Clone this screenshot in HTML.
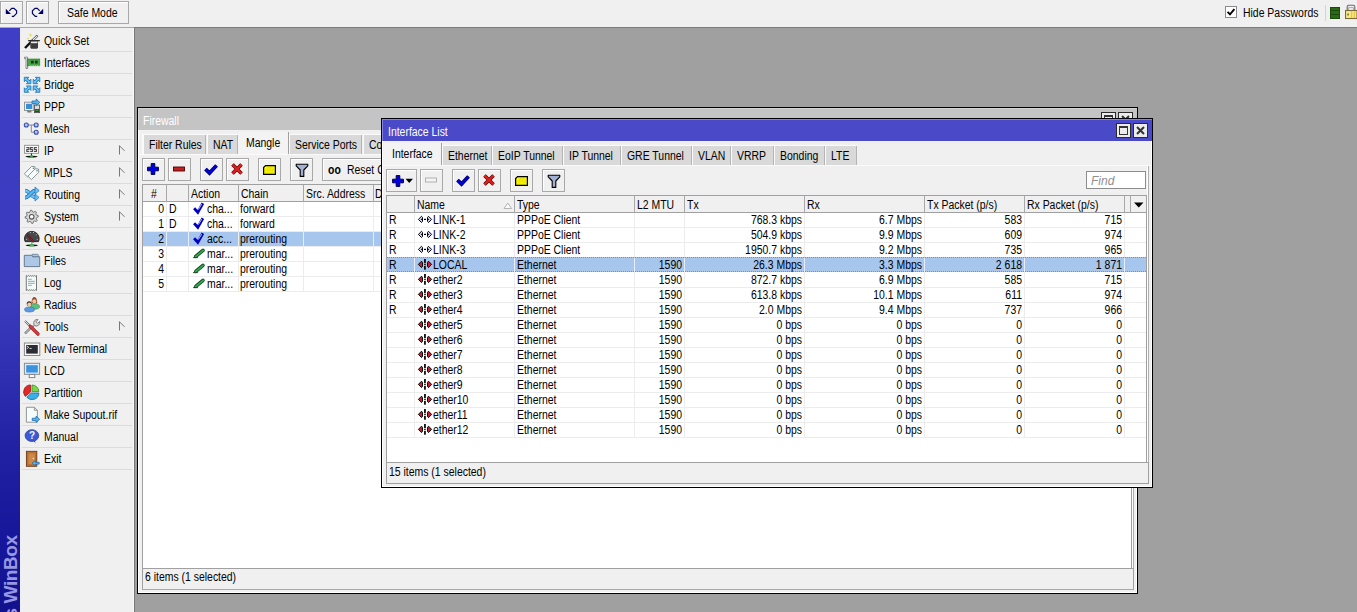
<!DOCTYPE html><html><head><meta charset="utf-8"><style>
*{box-sizing:border-box;margin:0;padding:0}
html,body{width:1357px;height:612px;overflow:hidden;background:#a0a0a0;font-family:"Liberation Sans", sans-serif;font-size:12px;letter-spacing:0;color:#000}
.a{position:absolute}
.t{position:absolute;white-space:pre;line-height:14px;transform:scaleX(.87);transform-origin:0 0}
.r{position:absolute;white-space:pre;line-height:14px;text-align:right;width:120px;transform:scaleX(.87);transform-origin:100% 0}
.btn{position:absolute;background:#f0f0f0;border:1px solid #a8a8a8;box-shadow:inset 1px 1px 0 #fff}
.sep{position:absolute;height:1px;background:#dcdcdc}
.tab{position:absolute;background:#d9d9d9;border-right:1px solid #b4b4b4;box-shadow:inset 1px 0 0 #fafafa,0 -1px 0 #fafafa}
.tabA{position:absolute;background:#f3f3f3;border-right:1px solid #a0a0a0}
.hdr{position:absolute;background:#f0f0f0}
.vl{position:absolute;width:1px}
svg{position:absolute;overflow:visible}
</style></head><body>
<div class="a" style="left:134px;top:27px;width:1223px;height:1px;background:#787878"></div>
<div class="a" style="left:134px;top:27px;width:1px;height:585px;background:#787878"></div>
<div class="a" style="left:0;top:0;width:1357px;height:27px;background:#f0f0f0"></div>
<div class="a" style="left:0;top:27px;width:134px;height:1px;background:#a8a8a8"></div>
<div class="a" style="left:134px;top:27px;width:1223px;height:1px;background:#7c7c7c"></div>
<div class="btn" style="left:0;top:1px;width:23px;height:23px"></div>
<div class="btn" style="left:26px;top:1px;width:23px;height:23px"></div>
<svg style="left:2px;top:3px" width="20" height="20" viewBox="0 0 20 20"><path d="M3.8 5.8 V11 H9Z" fill="#00006a"/><path d="M7.3 7.8 L9.7 5.4 H12 L14.6 7.8 V10.3 L11.6 13.4 H9.8" fill="none" stroke="#00006a" stroke-width="1.15"/></svg>
<svg style="left:28px;top:3px" width="20" height="20" viewBox="0 0 20 20"><path d="M15.2 5.8 V11 H10Z" fill="#00006a"/><path d="M11.7 7.8 L9.3 5.4 H7 L4.4 7.8 V10.5 L7.3 13.4 H9.2" fill="none" stroke="#00006a" stroke-width="1.15"/></svg>
<div class="btn" style="left:58px;top:1px;width:71px;height:23px"></div>
<div class="t" style="left:67px;top:6px">Safe Mode</div>
<div class="a" style="left:1225px;top:6px;width:12px;height:12px;background:#fff;border:1px solid #8a8a8a"></div>
<svg style="left:1226px;top:7px" width="10" height="10" viewBox="0 0 10 10"><path d="M1.6 4.8 L4 7.4 L8.4 2.2" fill="none" stroke="#000" stroke-width="1.9"/></svg>
<div class="t" style="left:1243px;top:6px">Hide Passwords</div>
<div class="a" style="left:1325px;top:5px;width:1px;height:16px;background:#d4d4d4"></div>
<div class="a" style="left:1330px;top:7px;width:10px;height:12px;background:#2a6a14;border:1px solid #1a4a0c"></div>
<div class="a" style="left:1331px;top:10px;width:8px;height:1px;background:#1a4a0c"></div>
<div class="a" style="left:1331px;top:14px;width:8px;height:1px;background:#1a4a0c"></div>
<svg style="left:1345px;top:4px" width="12" height="15" viewBox="0 0 12 15"><path d="M2.2 6.5 V2.8 Q2.2 1.3 3.7 1.3 H8.3 Q9.8 1.3 9.8 2.8 V6.5" fill="none" stroke="#6a6a6a" stroke-width="1.1"/><path d="M3.6 6.5 V3.6 H8.4 V6.5" fill="none" stroke="#8a8a8a" stroke-width="0.7"/><rect x="0.55" y="6.5" width="11.5" height="8" fill="#f8ea80" stroke="#7a6a3a" stroke-width="1.1"/><rect x="6.2" y="7.3" width="1" height="6.5" fill="#e8b848"/><rect x="8.8" y="7.3" width="1" height="6.5" fill="#e8b848"/><rect x="2.6" y="9.5" width="1" height="2" fill="#3a3010"/></svg>
<div class="a" style="left:0;top:28px;width:20px;height:584px;background:linear-gradient(#3e3ec6 0%,#3c3cc2 25%,#3a3abc 47%,#2e2eb0 60%,#2020a2 73%,#16169a 88%,#12128f 100%)"></div>
<svg style="left:0;top:500px" width="20" height="112" viewBox="0 0 20 112"><text transform="translate(17.2,118.5) rotate(-90)" font-family="Liberation Sans" font-size="19" font-weight="bold" fill="#9898e0" letter-spacing="-0.4">s WinBox</text></svg>
<div class="a" style="left:20px;top:28px;width:114px;height:584px;background:#f0f0f0"></div>
<div class="a" style="left:133px;top:28px;width:1px;height:584px;background:#fafafa"></div>
<div class="t" style="left:44px;top:34px">Quick Set</div>
<div class="sep" style="left:22px;top:51px;width:110px"></div>
<svg style="left:22px;top:30px" width="20" height="20" viewBox="0 0 20 20"><line x1="3" y1="18" x2="11" y2="10" stroke="#111" stroke-width="2.4"/>
<line x1="10.5" y1="10.5" x2="15.5" y2="5.5" stroke="#333" stroke-width="2.4"/>
<line x1="11" y1="10" x2="15.2" y2="5.8" stroke="#f4f4f4" stroke-width="1.1"/>
<path d="M8.3 11.2 H16 V17.6 Q16 18.7 14.8 18.7 H9.5 Q8.3 18.7 8.3 17.6Z" fill="#3c3c3c"/>
<rect x="8.9" y="11.4" width="6.5" height="1.8" fill="#eaeaea"/>
<rect x="6.2" y="10" width="11.6" height="1.3" fill="#2a2a2a"/>
<path d="M8.5 3 L9.1 4.4 L10.5 5 L9.1 5.6 L8.5 7 L7.9 5.6 L6.5 5 L7.9 4.4Z" fill="#e4dc60"/>
<path d="M6 7 L6.4 8.1 L7.5 8.5 L6.4 8.9 L6 10 L5.6 8.9 L4.5 8.5 L5.6 8.1Z" fill="#e4dc60"/></svg>
<div class="t" style="left:44px;top:56px">Interfaces</div>
<div class="sep" style="left:22px;top:73px;width:110px"></div>
<svg style="left:22px;top:52px" width="20" height="20" viewBox="0 0 20 20"><path d="M2.5 5.2 H5.6 V16.5 H4 V6.6 H2.5Z" fill="#f8f8f8" stroke="#7a7a7a" stroke-width="0.9"/>
<rect x="5.6" y="7" width="12.2" height="6.8" fill="#46a646" stroke="#2a7a2a" stroke-width="0.6"/>
<rect x="8.9" y="8.7" width="2.8" height="2.8" fill="#163a16"/>
<rect x="12.9" y="8.7" width="2.8" height="2.8" fill="#163a16"/>
<g fill="#c0e890"><rect x="7.8" y="13.2" width="0.9" height="0.9"/><rect x="9.6" y="13.2" width="0.9" height="0.9"/><rect x="11.4" y="13.2" width="0.9" height="0.9"/><rect x="13.2" y="13.2" width="0.9" height="0.9"/><rect x="15" y="13.2" width="0.9" height="0.9"/><rect x="16.6" y="13.2" width="0.9" height="0.9"/></g></svg>
<div class="t" style="left:44px;top:78px">Bridge</div>
<div class="sep" style="left:22px;top:95px;width:110px"></div>
<svg style="left:22px;top:74px" width="20" height="20" viewBox="0 0 20 20"><line x1="3.80" y1="4.80" x2="7.40" y2="8.20" stroke="#1f6db0" stroke-width="3"/><polygon points="2.30,3.30 6.80,3.30 2.30,7.80" fill="#5cc0f2" stroke="#1f6db0" stroke-width="0.8" stroke-linejoin="round"/><polygon points="8.90,9.70 8.90,5.20 4.40,9.70" fill="#5cc0f2" stroke="#1f6db0" stroke-width="0.8" stroke-linejoin="round"/><line x1="3.80" y1="4.80" x2="7.40" y2="8.20" stroke="#6ccaf6" stroke-width="1.5"/><line x1="16.30" y1="4.80" x2="12.70" y2="8.20" stroke="#1f6db0" stroke-width="3"/><polygon points="17.80,3.30 13.30,3.30 17.80,7.80" fill="#5cc0f2" stroke="#1f6db0" stroke-width="0.8" stroke-linejoin="round"/><polygon points="11.20,9.70 11.20,5.20 15.70,9.70" fill="#5cc0f2" stroke="#1f6db0" stroke-width="0.8" stroke-linejoin="round"/><line x1="16.30" y1="4.80" x2="12.70" y2="8.20" stroke="#6ccaf6" stroke-width="1.5"/><line x1="3.80" y1="16.80" x2="7.40" y2="13.40" stroke="#1f6db0" stroke-width="3"/><polygon points="2.30,18.30 6.80,18.30 2.30,13.80" fill="#5cc0f2" stroke="#1f6db0" stroke-width="0.8" stroke-linejoin="round"/><polygon points="8.90,11.90 8.90,16.40 4.40,11.90" fill="#5cc0f2" stroke="#1f6db0" stroke-width="0.8" stroke-linejoin="round"/><line x1="3.80" y1="16.80" x2="7.40" y2="13.40" stroke="#6ccaf6" stroke-width="1.5"/><line x1="16.30" y1="16.80" x2="12.70" y2="13.40" stroke="#1f6db0" stroke-width="3"/><polygon points="17.80,18.30 13.30,18.30 17.80,13.80" fill="#5cc0f2" stroke="#1f6db0" stroke-width="0.8" stroke-linejoin="round"/><polygon points="11.20,11.90 11.20,16.40 15.70,11.90" fill="#5cc0f2" stroke="#1f6db0" stroke-width="0.8" stroke-linejoin="round"/><line x1="16.30" y1="16.80" x2="12.70" y2="13.40" stroke="#6ccaf6" stroke-width="1.5"/></svg>
<div class="t" style="left:44px;top:100px">PPP</div>
<div class="sep" style="left:22px;top:117px;width:110px"></div>
<svg style="left:22px;top:96px" width="20" height="20" viewBox="0 0 20 20"><rect x="2.5" y="6.2" width="9.3" height="8.3" fill="#eef4fa" stroke="#8a8a8a" stroke-width="0.9"/>
<rect x="4" y="7.8" width="6.3" height="5.2" fill="#3a8ed8"/>
<rect x="5.2" y="14.6" width="4.2" height="1.9" fill="#7a7a7a"/>
<rect x="12.4" y="9" width="5.2" height="7.6" fill="#dcdcdc" stroke="#4a4a4a" stroke-width="0.8"/>
<rect x="12.9" y="13" width="4.2" height="3.2" fill="#284a28"/>
<rect x="13.5" y="13.8" width="2.8" height="1" fill="#50a050"/>
<path d="M10 5 H14.2 V3 L17.8 6.3 L14.2 9.6 V7.6 H10Z" fill="#54b4f0" stroke="#1f6db0" stroke-width="0.8" stroke-linejoin="round"/></svg>
<div class="t" style="left:44px;top:122px">Mesh</div>
<div class="sep" style="left:22px;top:139px;width:110px"></div>
<svg style="left:22px;top:118px" width="20" height="20" viewBox="0 0 20 20"><path d="M6.3 7 H12.2 M9.3 7 V14.2 H12.2" fill="none" stroke="#8a8a8a" stroke-width="1"/>
<g fill="#b0c4fa" stroke="#3a4caa" stroke-width="1.1"><circle cx="4.3" cy="7" r="2"/><circle cx="14.2" cy="7" r="2"/><circle cx="14.2" cy="14.2" r="2"/></g></svg>
<div class="t" style="left:44px;top:144px">IP</div>
<div class="sep" style="left:22px;top:161px;width:110px"></div>
<svg style="left:22px;top:140px" width="20" height="20" viewBox="0 0 20 20"><rect x="2.6" y="5.3" width="14" height="8" fill="#fff" stroke="#8a8a8a" stroke-width="0.9"/>
<g fill="none" stroke="#505050" stroke-width="1.15" stroke-linejoin="miter"><path d="M4.3 7.5 H6.9 V9.4 H4.8 V11.3 H7.3"/><path d="M11 7.5 H8.5 V9.3 H10.6 V11.3 H8.1"/><path d="M14.9 7.5 H12.4 V9.3 H14.5 V11.3 H12"/></g>
<line x1="9.5" y1="13.3" x2="9.5" y2="16.5" stroke="#1a4a1a" stroke-width="1.1"/>
<ellipse cx="9.5" cy="16.6" rx="6.2" ry="0.9" fill="#111"/>
<circle cx="9.5" cy="16.6" r="1.3" fill="#3cb040"/></svg>
<svg style="left:118px;top:145px" width="8" height="10" viewBox="0 0 8 10"><path d="M1.5 0.5 V9.5 M1.5 0.8 L6.5 5.8" fill="none" stroke="#777" stroke-width="1"/></svg>
<div class="t" style="left:44px;top:166px">MPLS</div>
<div class="sep" style="left:22px;top:183px;width:110px"></div>
<svg style="left:22px;top:162px" width="20" height="20" viewBox="0 0 20 20"><g fill="#f6fcfc" stroke="#7f8f8f" stroke-width="0.9" stroke-linejoin="round">
<path d="M5.9 15.2 L2.3 11.8 L9.6 4.4 L12.9 4.6 L13.2 7.9Z"/>
<path d="M9.4 17.6 L5.9 14.2 L13.2 6.8 L16.5 7 L16.8 10.3Z"/></g>
<circle cx="11.4" cy="6.3" r="0.7" fill="#667"/><circle cx="15" cy="8.7" r="0.7" fill="#667"/></svg>
<svg style="left:118px;top:167px" width="8" height="10" viewBox="0 0 8 10"><path d="M1.5 0.5 V9.5 M1.5 0.8 L6.5 5.8" fill="none" stroke="#777" stroke-width="1"/></svg>
<div class="t" style="left:44px;top:188px">Routing</div>
<div class="sep" style="left:22px;top:205px;width:110px"></div>
<svg style="left:22px;top:184px" width="20" height="20" viewBox="0 0 20 20"><path d="M3.2 13.6 C8 13.6 8.5 6.6 13.6 6.6" fill="none" stroke="#2a78c0" stroke-width="3.6"/>
<path d="M3.2 6.6 C8 6.6 8.5 13.4 13.6 13.4" fill="none" stroke="#2a78c0" stroke-width="3.6"/>
<path d="M3.2 6.6 C8 6.6 8.5 13.4 13.6 13.4" fill="none" stroke="#6cc4f4" stroke-width="2.2"/>
<polygon points="13,9.8 17,13.4 13,17" fill="#6cc4f4" stroke="#2a78c0" stroke-width="0.8" stroke-linejoin="round"/>
<path d="M3.2 13.6 C8 13.6 8.5 6.6 13.6 6.6" fill="none" stroke="#2a78c0" stroke-width="3.6"/>
<path d="M3.2 13.6 C8 13.6 8.5 6.6 13.6 6.6" fill="none" stroke="#5ab8f0" stroke-width="2.2"/>
<polygon points="13,3 17.2,6.6 13,10.2" fill="#6cc4f4" stroke="#2a78c0" stroke-width="0.8" stroke-linejoin="round"/></svg>
<svg style="left:118px;top:189px" width="8" height="10" viewBox="0 0 8 10"><path d="M1.5 0.5 V9.5 M1.5 0.8 L6.5 5.8" fill="none" stroke="#777" stroke-width="1"/></svg>
<div class="t" style="left:44px;top:210px">System</div>
<div class="sep" style="left:22px;top:227px;width:110px"></div>
<svg style="left:22px;top:206px" width="20" height="20" viewBox="0 0 20 20"><polygon points="16.17,9.51 16.30,10.80 14.51,11.76 14.23,12.68 15.19,14.47 14.37,15.47 12.42,14.87 11.58,15.33 10.99,17.27 9.70,17.40 8.74,15.61 7.82,15.33 6.03,16.29 5.03,15.47 5.63,13.52 5.17,12.68 3.23,12.09 3.10,10.80 4.89,9.84 5.17,8.92 4.21,7.13 5.03,6.13 6.98,6.73 7.82,6.27 8.41,4.33 9.70,4.20 10.66,5.99 11.58,6.27 13.37,5.31 14.37,6.13 13.77,8.08 14.23,8.92" fill="#d8d8d8" stroke="#6a6a6a" stroke-width="0.9" stroke-linejoin="round"/><circle cx="9.7" cy="10.8" r="2.3" fill="#fff" stroke="#555" stroke-width="1.1"/></svg>
<svg style="left:118px;top:211px" width="8" height="10" viewBox="0 0 8 10"><path d="M1.5 0.5 V9.5 M1.5 0.8 L6.5 5.8" fill="none" stroke="#777" stroke-width="1"/></svg>
<div class="t" style="left:44px;top:232px">Queues</div>
<div class="sep" style="left:22px;top:249px;width:110px"></div>
<svg style="left:22px;top:228px" width="20" height="20" viewBox="0 0 20 20"><path d="M3.1 13.6 A7.3 7.3 0 1 1 16.5 13.6 Z" fill="#484848" stroke="#1c1c1c" stroke-width="0.9"/>
<g fill="#d0d0d0"><circle cx="4.6" cy="11.2" r="0.55"/><circle cx="5.6" cy="6.8" r="0.55"/><circle cx="8.3" cy="4.6" r="0.55"/><circle cx="11.5" cy="4.6" r="0.55"/><circle cx="14.3" cy="6.8" r="0.55"/><circle cx="15.3" cy="11.2" r="0.55"/></g>
<line x1="5.2" y1="6.2" x2="11.6" y2="14.2" stroke="#2a0a10" stroke-width="1.8"/>
<line x1="5.2" y1="6.2" x2="11.6" y2="14.2" stroke="#b02838" stroke-width="1"/>
<line x1="9.8" y1="13.6" x2="9.8" y2="16.2" stroke="#888" stroke-width="1"/>
<ellipse cx="9.8" cy="17.3" rx="6.3" ry="0.9" fill="#111"/>
<ellipse cx="9.8" cy="17.3" rx="2.3" ry="1.3" fill="#34c040"/></svg>
<div class="t" style="left:44px;top:254px">Files</div>
<div class="sep" style="left:22px;top:271px;width:110px"></div>
<svg style="left:22px;top:250px" width="20" height="20" viewBox="0 0 20 20"><path d="M10 4.3 H15.8 L16.6 5.6 V7 H10Z" fill="#a8c8e8" stroke="#647c94" stroke-width="0.8"/>
<path d="M2.3 5.3 H9.6 L10.8 6.8 H17.7 V16.6 H2.3Z" fill="#acc8e6" stroke="#5c7088" stroke-width="0.9" stroke-linejoin="round"/></svg>
<div class="t" style="left:44px;top:276px">Log</div>
<div class="sep" style="left:22px;top:293px;width:110px"></div>
<svg style="left:22px;top:272px" width="20" height="20" viewBox="0 0 20 20"><path d="M4.3 3.5 L5.3 4.3 L6.3 3.5 L7.3 4.3 L8.3 3.5 L9.3 4.3 L10.3 3.5 L11.3 4.3 L12.3 3.5 L13.3 4.3 L14.5 3.5 V18.5 L13.3 17.7 L12.3 18.5 L11.3 17.7 L10.3 18.5 L9.3 17.7 L8.3 18.5 L7.3 17.7 L6.3 18.5 L5.3 17.7 L4.3 18.5Z" fill="#f2fafa" stroke="#6a6a6a" stroke-width="0.9"/>
<g stroke="#8aa0a0" stroke-width="0.9"><line x1="6" y1="7.3" x2="9.8" y2="7.3"/><line x1="6" y1="9.3" x2="12.8" y2="9.3"/><line x1="6" y1="11.3" x2="12.8" y2="11.3"/><line x1="6" y1="13.3" x2="9.8" y2="13.3"/></g></svg>
<div class="t" style="left:44px;top:298px">Radius</div>
<div class="sep" style="left:22px;top:315px;width:110px"></div>
<svg style="left:22px;top:294px" width="20" height="20" viewBox="0 0 20 20"><ellipse cx="13" cy="12.6" rx="4.6" ry="2.6" fill="#5cc07a" stroke="#3a8a5a" stroke-width="0.6"/>
<path d="M9.6 9.5 Q9.5 3 12.3 3 Q15.2 3 15.2 9.5Z" fill="#8a4a2a"/>
<circle cx="12.3" cy="7.3" r="2" fill="#f0c8a0"/>
<ellipse cx="7.5" cy="15.5" rx="5" ry="2.5" fill="#5a9ae0" stroke="#3a6aaa" stroke-width="0.6"/>
<circle cx="7.2" cy="9.8" r="2.5" fill="#3a2a20"/>
<circle cx="7.3" cy="10.5" r="2" fill="#f0c8a0"/></svg>
<div class="t" style="left:44px;top:320px">Tools</div>
<div class="sep" style="left:22px;top:337px;width:110px"></div>
<svg style="left:22px;top:316px" width="20" height="20" viewBox="0 0 20 20"><line x1="3" y1="17.5" x2="9.5" y2="11" stroke="#6a7070" stroke-width="2.4"/>
<line x1="3" y1="17.5" x2="9.5" y2="11" stroke="#d8dcdc" stroke-width="1"/>
<path d="M9 11.5 L12 8.5 A3.5 3.5 0 0 1 16 3.6 L14 5.8 L15.6 7.4 L17.6 5.4 A3.5 3.5 0 0 1 12.5 9.5 L10 12.5Z" fill="#dcdcdc" stroke="#707070" stroke-width="0.9"/>
<line x1="3" y1="5" x2="8" y2="10" stroke="#6a6a6a" stroke-width="2"/>
<line x1="3" y1="5" x2="8" y2="10" stroke="#e0e0e0" stroke-width="0.9"/>
<line x1="8.3" y1="10.3" x2="16" y2="18" stroke="#8a1a1a" stroke-width="3.2" stroke-linecap="round"/>
<line x1="8.3" y1="10.3" x2="16" y2="18" stroke="#e03a3a" stroke-width="2" stroke-linecap="round"/></svg>
<svg style="left:118px;top:321px" width="8" height="10" viewBox="0 0 8 10"><path d="M1.5 0.5 V9.5 M1.5 0.8 L6.5 5.8" fill="none" stroke="#777" stroke-width="1"/></svg>
<div class="t" style="left:44px;top:342px">New Terminal</div>
<div class="sep" style="left:22px;top:359px;width:110px"></div>
<svg style="left:22px;top:338px" width="20" height="20" viewBox="0 0 20 20"><rect x="2.4" y="5" width="15.4" height="12.5" fill="#f8f8f8" stroke="#8a8a8a" stroke-width="1"/>
<rect x="4.2" y="7" width="11.6" height="8.6" fill="#2c2c34"/>
<path d="M5 8 L6.8 9.3 L5 10.6" fill="none" stroke="#e8e8e8" stroke-width="0.9"/>
<rect x="7.6" y="10" width="2" height="0.9" fill="#e8e8e8"/></svg>
<div class="t" style="left:44px;top:364px">LCD</div>
<div class="sep" style="left:22px;top:381px;width:110px"></div>
<svg style="left:22px;top:360px" width="20" height="20" viewBox="0 0 20 20"><rect x="2.4" y="3.3" width="15.2" height="11" fill="#dcefff" stroke="#8a8a8a" stroke-width="1"/>
<rect x="4.2" y="5.2" width="11.6" height="7.4" fill="#3c92dc"/>
<rect x="7.2" y="14.4" width="5.6" height="3.2" fill="#fafafa" stroke="#7a7a7a" stroke-width="0.9"/></svg>
<div class="t" style="left:44px;top:386px">Partition</div>
<div class="sep" style="left:22px;top:403px;width:110px"></div>
<svg style="left:22px;top:382px" width="20" height="20" viewBox="0 0 20 20"><path d="M10 9.6 V3 A6.8 6.8 0 0 1 16.9 9.6 Z" fill="#78d848" stroke="#3a8a2a" stroke-width="0.8"/>
<path d="M16.9 11 A6.9 6.9 0 0 1 4.8 15.3 L9.3 11 Z" fill="#3ab0e8" stroke="#1a6aa8" stroke-width="0.8"/>
<path d="M8.6 3 V10 L3.3 14.4 A6.9 6.9 0 0 1 8.6 3Z" fill="#e02828" stroke="#9a1a1a" stroke-width="0.8"/></svg>
<div class="t" style="left:44px;top:408px">Make Supout.rif</div>
<div class="sep" style="left:22px;top:425px;width:110px"></div>
<svg style="left:22px;top:404px" width="20" height="20" viewBox="0 0 20 20"><path d="M4.4 3.3 H12.4 L15.4 6.3 V18.2 H4.4Z" fill="#f4fcfc" stroke="#8a8a8a" stroke-width="0.9" stroke-linejoin="round"/>
<path d="M12.4 3.3 V6.3 H15.4" fill="none" stroke="#8a8a8a" stroke-width="0.9"/>
<path d="M10.2 14.2 H14 V12.2 L17.7 15.3 L14 18.4 V16.5 H10.2Z" fill="#54b4f0" stroke="#1f6db0" stroke-width="0.8" stroke-linejoin="round"/></svg>
<div class="t" style="left:44px;top:430px">Manual</div>
<div class="sep" style="left:22px;top:447px;width:110px"></div>
<svg style="left:22px;top:426px" width="20" height="20" viewBox="0 0 20 20"><path d="M11.5 14.5 L13.6 17.6 L12.6 13.8Z" fill="#2a3aa0"/>
<ellipse cx="9.9" cy="9.6" rx="6.8" ry="5.9" fill="#3c5ad4" stroke="#2a3aa0" stroke-width="0.8"/>
<text x="10" y="13.4" font-size="10" font-weight="bold" text-anchor="middle" fill="#f4f8ff" font-family="Liberation Sans" letter-spacing="0">?</text></svg>
<div class="t" style="left:44px;top:452px">Exit</div>
<div class="sep" style="left:22px;top:469px;width:110px"></div>
<svg style="left:22px;top:448px" width="20" height="20" viewBox="0 0 20 20"><rect x="4.4" y="3.3" width="10.4" height="15" fill="#c07838" stroke="#6a3a18" stroke-width="0.9"/>
<rect x="6" y="5" width="7.2" height="11.8" fill="#d08848" stroke="#a86028" stroke-width="0.6"/>
<circle cx="11.4" cy="10.5" r="0.8" fill="#f8e0c0"/>
<path d="M17.2 14.3 H13.2 V12.8 L10 15.2 L13.2 17.6 V16.1 H17.2Z" fill="#5ab8f0" stroke="#1f6db0" stroke-width="0.8" stroke-linejoin="round"/></svg>
<div class="a" style="left:137px;top:107px;width:1001px;height:487px;background:#f0f0f0;border:1px solid #000"></div>
<div class="a" style="left:138px;top:108px;width:999px;height:485px;border:1px solid #fff"></div>
<div class="a" style="left:138px;top:108px;width:999px;height:22px;background:#c4c4c4;border-top:1px solid #d4d4d4;border-left:1px solid #d4d4d4"></div>
<div class="t" style="left:143px;top:114px;color:#fff">Firewall</div>
<div class="a" style="left:1101px;top:112px;width:15px;height:15px;background:#ececec;border:1px solid #2a2a2a"></div>
<div class="a" style="left:1104px;top:115px;width:9px;height:9px;border:1px solid #333;border-top-width:2px"></div>
<div class="a" style="left:1118px;top:112px;width:15px;height:15px;background:#ececec;border:1px solid #2a2a2a"></div>
<svg style="left:1121px;top:115px" width="9" height="9" viewBox="0 0 9 9"><path d="M1 1 L8 8 M8 1 L1 8" stroke="#333" stroke-width="2"/></svg>
<div class="tab" style="left:143px;top:135px;width:63px;height:19px"></div>
<div class="t" style="left:149px;top:138px">Filter Rules</div>
<div class="tab" style="left:207px;top:135px;width:31px;height:19px"></div>
<div class="t" style="left:213px;top:138px">NAT</div>
<div class="tabA" style="left:238px;top:132px;width:51px;height:23px"></div>
<div class="t" style="left:246px;top:136px">Mangle</div>
<div class="tab" style="left:289px;top:135px;width:73px;height:19px"></div>
<div class="t" style="left:295px;top:138px">Service Ports</div>
<div class="tab" style="left:363px;top:135px;width:77px;height:19px"></div>
<div class="t" style="left:369px;top:138px">Connections</div>
<div class="a" style="left:138px;top:154px;width:999px;height:1px;background:#fafafa"></div>
<div class="a" style="left:142px;top:134px;width:1px;height:20px;background:#fafafa"></div>
<div class="btn" style="left:142px;top:158px;width:23px;height:23px"></div>
<div class="btn" style="left:168px;top:158px;width:23px;height:23px"></div>
<div class="btn" style="left:200px;top:158px;width:23px;height:23px"></div>
<div class="btn" style="left:226px;top:158px;width:23px;height:23px"></div>
<div class="btn" style="left:258px;top:158px;width:23px;height:23px"></div>
<div class="btn" style="left:290px;top:158px;width:23px;height:23px"></div>
<svg style="left:147px;top:163px" width="12" height="12" viewBox="0 0 12 12"><path d="M4.2 0.6 H7.8 V4.2 H11.4 V7.8 H7.8 V11.4 H4.2 V7.8 H0.6 V4.2 H4.2Z" fill="#0000e8" stroke="#000040" stroke-width="1" stroke-linejoin="miter"/></svg>
<svg style="left:172px;top:165px" width="14" height="8" viewBox="0 0 14 8"><rect x="1.5" y="2" width="11" height="4" fill="#c02020" stroke="#500000" stroke-width="0.9"/></svg>
<svg style="left:203px;top:161px" width="16" height="16" viewBox="0 0 16 16"><path d="M2.5 8.2 L6.5 12 L13.5 4.5" fill="none" stroke="#000060" stroke-width="3.8"/><path d="M2.5 8.2 L6.5 12 L13.5 4.5" fill="none" stroke="#0000d8" stroke-width="2.4"/></svg>
<svg style="left:229px;top:161px" width="16" height="16" viewBox="0 0 16 16"><path d="M3.5 3.5 L12.5 12.5 M12.5 3.5 L3.5 12.5" fill="none" stroke="#600000" stroke-width="3.6"/><path d="M3.5 3.5 L12.5 12.5 M12.5 3.5 L3.5 12.5" fill="none" stroke="#e02020" stroke-width="2.2"/></svg>
<svg style="left:263px;top:165px" width="14" height="11" viewBox="0 0 14 11"><path d="M2.6 0.6 H12.4 V9.4 H0.6 V2.6Z" fill="#f4ee00" stroke="#000" stroke-width="1.2"/><circle cx="2.6" cy="2.6" r="0.6" fill="#fff"/><g fill="#d8cc00"><rect x="5" y="2.5" width="1.2" height="0.8"/><rect x="7.5" y="2.5" width="1.2" height="0.8"/><rect x="4" y="4.6" width="1.2" height="0.8"/><rect x="6.5" y="4.6" width="1.2" height="0.8"/><rect x="9" y="4.6" width="1.2" height="0.8"/></g></svg>
<svg style="left:295px;top:163px" width="14" height="14" viewBox="0 0 14 14"><path d="M1.2 1.2 H12.8 V2.8 L8.8 7 V13.4 H5.2 V7 L1.2 2.8Z" fill="#a4b0d0" stroke="#000" stroke-width="1.1" stroke-linejoin="round"/></svg>
<div class="btn" style="left:322px;top:158px;width:90px;height:23px"></div>
<div class="t" style="left:328px;top:163px;font-weight:bold;letter-spacing:0">oo</div><div class="t" style="left:347px;top:163px">Reset Counters</div>
<div class="a" style="left:142px;top:184px;width:990px;height:385px;background:#fff;border:1px solid #a0a0a0"></div>
<div class="hdr" style="left:143px;top:185px;width:988px;height:17px;border-bottom:1px solid #a0a0a0"></div>
<div class="vl" style="left:166px;top:185px;height:17px;background:#a8a8a8"></div>
<div class="vl" style="left:166px;top:202px;height:89px;background:#ececec"></div>
<div class="vl" style="left:188px;top:185px;height:17px;background:#a8a8a8"></div>
<div class="vl" style="left:188px;top:202px;height:89px;background:#ececec"></div>
<div class="vl" style="left:238px;top:185px;height:17px;background:#a8a8a8"></div>
<div class="vl" style="left:238px;top:202px;height:89px;background:#ececec"></div>
<div class="vl" style="left:303px;top:185px;height:17px;background:#a8a8a8"></div>
<div class="vl" style="left:303px;top:202px;height:89px;background:#ececec"></div>
<div class="vl" style="left:373px;top:185px;height:17px;background:#a8a8a8"></div>
<div class="vl" style="left:373px;top:202px;height:89px;background:#ececec"></div>
<div class="vl" style="left:500px;top:185px;height:17px;background:#a8a8a8"></div>
<div class="vl" style="left:500px;top:202px;height:89px;background:#ececec"></div>
<div class="t" style="left:151px;top:187px">#</div><div class="t" style="left:191px;top:187px">Action</div><div class="t" style="left:241px;top:187px">Chain</div><div class="t" style="left:306px;top:187px">Src. Address</div><div class="t" style="left:375px;top:187px">Dst. Address</div>
<div class="a" style="left:143px;top:216px;width:988px;height:1px;background:#ececec"></div>
<div class="r" style="left:44px;top:202px">0</div>
<div class="t" style="left:169px;top:202px">D</div>
<svg style="left:193px;top:202px" width="12" height="12" viewBox="0 0 12 12"><path d="M1.1 6.3 L4.8 10.3 L9.9 1.2" fill="none" stroke="#0000c0" stroke-width="2.8"/><path d="M5.4 7.6 L8.7 2.2" fill="none" stroke="#e8e8ff" stroke-width="0.8"/></svg>
<div class="t" style="left:207px;top:202px">cha...</div>
<div class="t" style="left:240px;top:202px">forward</div>
<div class="a" style="left:143px;top:231px;width:988px;height:1px;background:#ececec"></div>
<div class="r" style="left:44px;top:217px">1</div>
<div class="t" style="left:169px;top:217px">D</div>
<svg style="left:193px;top:217px" width="12" height="12" viewBox="0 0 12 12"><path d="M1.1 6.3 L4.8 10.3 L9.9 1.2" fill="none" stroke="#0000c0" stroke-width="2.8"/><path d="M5.4 7.6 L8.7 2.2" fill="none" stroke="#e8e8ff" stroke-width="0.8"/></svg>
<div class="t" style="left:207px;top:217px">cha...</div>
<div class="t" style="left:240px;top:217px">forward</div>
<div class="a" style="left:143px;top:232px;width:988px;height:14px;background:#a6c6ee"></div>
<div class="vl" style="left:166px;top:232px;height:14px;background:#e8eef8"></div>
<div class="vl" style="left:188px;top:232px;height:14px;background:#e8eef8"></div>
<div class="vl" style="left:238px;top:232px;height:14px;background:#e8eef8"></div>
<div class="vl" style="left:303px;top:232px;height:14px;background:#e8eef8"></div>
<div class="vl" style="left:373px;top:232px;height:14px;background:#e8eef8"></div>
<div class="vl" style="left:500px;top:232px;height:14px;background:#e8eef8"></div>
<div class="a" style="left:143px;top:246px;width:988px;height:1px;background:#ececec"></div>
<div class="r" style="left:44px;top:232px">2</div>
<div class="t" style="left:169px;top:232px"></div>
<svg style="left:193px;top:232px" width="12" height="12" viewBox="0 0 12 12"><path d="M1.1 6.3 L4.8 10.3 L9.9 1.2" fill="none" stroke="#0000c0" stroke-width="2.8"/><path d="M5.4 7.6 L8.7 2.2" fill="none" stroke="#e8e8ff" stroke-width="0.8"/></svg>
<div class="t" style="left:207px;top:232px">acc...</div>
<div class="t" style="left:240px;top:232px">prerouting</div>
<div class="a" style="left:143px;top:261px;width:988px;height:1px;background:#ececec"></div>
<div class="r" style="left:44px;top:247px">3</div>
<div class="t" style="left:169px;top:247px"></div>
<svg style="left:193px;top:248px" width="12" height="12" viewBox="0 0 12 12"><path d="M0.2 9.6 H4.8" fill="none" stroke="#104010" stroke-width="1"/><path d="M2.8 8.4 L10 2.4" fill="none" stroke="#0a3a14" stroke-width="3.4" stroke-linecap="round"/><path d="M2.8 8.4 L10 2.4" fill="none" stroke="#30a850" stroke-width="2" stroke-linecap="round"/></svg>
<div class="t" style="left:207px;top:247px">mar...</div>
<div class="t" style="left:240px;top:247px">prerouting</div>
<div class="a" style="left:143px;top:276px;width:988px;height:1px;background:#ececec"></div>
<div class="r" style="left:44px;top:262px">4</div>
<div class="t" style="left:169px;top:262px"></div>
<svg style="left:193px;top:263px" width="12" height="12" viewBox="0 0 12 12"><path d="M0.2 9.6 H4.8" fill="none" stroke="#104010" stroke-width="1"/><path d="M2.8 8.4 L10 2.4" fill="none" stroke="#0a3a14" stroke-width="3.4" stroke-linecap="round"/><path d="M2.8 8.4 L10 2.4" fill="none" stroke="#30a850" stroke-width="2" stroke-linecap="round"/></svg>
<div class="t" style="left:207px;top:262px">mar...</div>
<div class="t" style="left:240px;top:262px">prerouting</div>
<div class="a" style="left:143px;top:291px;width:988px;height:1px;background:#ececec"></div>
<div class="r" style="left:44px;top:277px">5</div>
<div class="t" style="left:169px;top:277px"></div>
<svg style="left:193px;top:278px" width="12" height="12" viewBox="0 0 12 12"><path d="M0.2 9.6 H4.8" fill="none" stroke="#104010" stroke-width="1"/><path d="M2.8 8.4 L10 2.4" fill="none" stroke="#0a3a14" stroke-width="3.4" stroke-linecap="round"/><path d="M2.8 8.4 L10 2.4" fill="none" stroke="#30a850" stroke-width="2" stroke-linecap="round"/></svg>
<div class="t" style="left:207px;top:277px">mar...</div>
<div class="t" style="left:240px;top:277px">prerouting</div>
<div class="a" style="left:1132px;top:155px;width:1px;height:413px;background:#fff"></div>
<div class="a" style="left:1133px;top:155px;width:1px;height:413px;background:#b0b0b0"></div>
<div class="a" style="left:142px;top:568px;width:992px;height:22px;border:1px solid #a0a0a0;border-bottom-color:#a8a8a8"></div>
<div class="t" style="left:145px;top:570px">6 items (1 selected)</div>
<div class="a" style="left:381px;top:118px;width:772px;height:370px;background:#f0f0f0;border:1px solid #000"></div>
<div class="a" style="left:382px;top:119px;width:770px;height:368px;border:1px solid #fff"></div>
<div class="a" style="left:382px;top:119px;width:770px;height:22px;background:#4a4ac9;border-top:1px solid #8484e4;border-left:1px solid #8484e4"></div>
<div class="t" style="left:388px;top:125px;color:#fff">Interface List</div>
<div class="a" style="left:1116px;top:123px;width:15px;height:15px;background:#ececec;border:1px solid #2a2a2a"></div>
<div class="a" style="left:1119px;top:126px;width:9px;height:9px;border:1px solid #333;border-top-width:2px"></div>
<div class="a" style="left:1133px;top:123px;width:15px;height:15px;background:#ececec;border:1px solid #2a2a2a"></div>
<svg style="left:1136px;top:126px" width="9" height="9" viewBox="0 0 9 9"><path d="M1 1 L8 8 M8 1 L1 8" stroke="#333" stroke-width="2"/></svg>
<div class="tabA" style="left:384px;top:143px;width:58px;height:22px"></div>
<div class="t" style="left:392px;top:147px">Interface</div>
<div class="tab" style="left:442px;top:146px;width:50px;height:19px"></div>
<div class="t" style="left:448px;top:149px">Ethernet</div>
<div class="tab" style="left:492px;top:146px;width:71px;height:19px"></div>
<div class="t" style="left:498px;top:149px">EoIP Tunnel</div>
<div class="tab" style="left:563px;top:146px;width:58px;height:19px"></div>
<div class="t" style="left:569px;top:149px">IP Tunnel</div>
<div class="tab" style="left:621px;top:146px;width:71px;height:19px"></div>
<div class="t" style="left:627px;top:149px">GRE Tunnel</div>
<div class="tab" style="left:692px;top:146px;width:39px;height:19px"></div>
<div class="t" style="left:698px;top:149px">VLAN</div>
<div class="tab" style="left:731px;top:146px;width:43px;height:19px"></div>
<div class="t" style="left:737px;top:149px">VRRP</div>
<div class="tab" style="left:774px;top:146px;width:51px;height:19px"></div>
<div class="t" style="left:780px;top:149px">Bonding</div>
<div class="tab" style="left:825px;top:146px;width:32px;height:19px"></div>
<div class="t" style="left:831px;top:149px">LTE</div>
<div class="a" style="left:382px;top:165px;width:770px;height:1px;background:#fafafa"></div>
<div class="btn" style="left:386px;top:169px;width:31px;height:23px"></div>
<svg style="left:392px;top:175px" width="12" height="12" viewBox="0 0 12 12"><path d="M4.2 0.6 H7.8 V4.2 H11.4 V7.8 H7.8 V11.4 H4.2 V7.8 H0.6 V4.2 H4.2Z" fill="#0000e8" stroke="#000040" stroke-width="1" stroke-linejoin="miter"/></svg>
<svg style="left:405px;top:178px" width="9" height="6" viewBox="0 0 9 6"><path d="M0.5 0.8 H8 L4.25 5Z" fill="#000"/></svg>
<div class="btn" style="left:420px;top:169px;width:23px;height:23px"></div>
<div class="btn" style="left:452px;top:169px;width:23px;height:23px"></div>
<div class="btn" style="left:478px;top:169px;width:23px;height:23px"></div>
<div class="btn" style="left:510px;top:169px;width:23px;height:23px"></div>
<div class="btn" style="left:542px;top:169px;width:23px;height:23px"></div>
<svg style="left:424px;top:176px" width="14" height="8" viewBox="0 0 14 8"><rect x="1.5" y="2" width="11" height="4" fill="#f4f4f4" stroke="#b0b0b0" stroke-width="1"/></svg>
<svg style="left:455px;top:172px" width="16" height="16" viewBox="0 0 16 16"><path d="M2.5 8.2 L6.5 12 L13.5 4.5" fill="none" stroke="#000060" stroke-width="3.8"/><path d="M2.5 8.2 L6.5 12 L13.5 4.5" fill="none" stroke="#0000d8" stroke-width="2.4"/></svg>
<svg style="left:481px;top:172px" width="16" height="16" viewBox="0 0 16 16"><path d="M3.5 3.5 L12.5 12.5 M12.5 3.5 L3.5 12.5" fill="none" stroke="#600000" stroke-width="3.6"/><path d="M3.5 3.5 L12.5 12.5 M12.5 3.5 L3.5 12.5" fill="none" stroke="#e02020" stroke-width="2.2"/></svg>
<svg style="left:515px;top:176px" width="14" height="11" viewBox="0 0 14 11"><path d="M2.6 0.6 H12.4 V9.4 H0.6 V2.6Z" fill="#f4ee00" stroke="#000" stroke-width="1.2"/><circle cx="2.6" cy="2.6" r="0.6" fill="#fff"/><g fill="#d8cc00"><rect x="5" y="2.5" width="1.2" height="0.8"/><rect x="7.5" y="2.5" width="1.2" height="0.8"/><rect x="4" y="4.6" width="1.2" height="0.8"/><rect x="6.5" y="4.6" width="1.2" height="0.8"/><rect x="9" y="4.6" width="1.2" height="0.8"/></g></svg>
<svg style="left:547px;top:174px" width="14" height="14" viewBox="0 0 14 14"><path d="M1.2 1.2 H12.8 V2.8 L8.8 7 V13.4 H5.2 V7 L1.2 2.8Z" fill="#a4b0d0" stroke="#000" stroke-width="1.1" stroke-linejoin="round"/></svg>
<div class="a" style="left:1086px;top:171px;width:60px;height:18px;background:#fff;border:1px solid #8c8c8c"></div>
<div class="t" style="left:1091px;top:174px;color:#909090;font-style:italic;transform:none">Find</div>
<div class="a" style="left:386px;top:195px;width:761px;height:268px;background:#fff;border:1px solid #a0a0a0"></div>
<div class="hdr" style="left:387px;top:196px;width:759px;height:17px;border-bottom:1px solid #a0a0a0"></div>
<div class="vl" style="left:414px;top:196px;height:17px;background:#a8a8a8"></div>
<div class="vl" style="left:414px;top:213px;height:224px;background:#ececec"></div>
<div class="vl" style="left:514px;top:196px;height:17px;background:#a8a8a8"></div>
<div class="vl" style="left:514px;top:213px;height:224px;background:#ececec"></div>
<div class="vl" style="left:634px;top:196px;height:17px;background:#a8a8a8"></div>
<div class="vl" style="left:634px;top:213px;height:224px;background:#ececec"></div>
<div class="vl" style="left:684px;top:196px;height:17px;background:#a8a8a8"></div>
<div class="vl" style="left:684px;top:213px;height:224px;background:#ececec"></div>
<div class="vl" style="left:804px;top:196px;height:17px;background:#a8a8a8"></div>
<div class="vl" style="left:804px;top:213px;height:224px;background:#ececec"></div>
<div class="vl" style="left:924px;top:196px;height:17px;background:#a8a8a8"></div>
<div class="vl" style="left:924px;top:213px;height:224px;background:#ececec"></div>
<div class="vl" style="left:1024px;top:196px;height:17px;background:#a8a8a8"></div>
<div class="vl" style="left:1024px;top:213px;height:224px;background:#ececec"></div>
<div class="vl" style="left:1124px;top:196px;height:17px;background:#a8a8a8"></div>
<div class="vl" style="left:1124px;top:213px;height:224px;background:#ececec"></div>
<div class="vl" style="left:1130px;top:196px;height:17px;background:#a8a8a8"></div>
<svg style="left:1134px;top:202px" width="10" height="6" viewBox="0 0 10 6"><path d="M0 0.5 H9.5 L4.75 5.5Z" fill="#000"/></svg>
<svg style="left:503px;top:202px" width="10" height="8" viewBox="0 0 10 8"><path d="M1 6.5 L4.8 1 L8.5 6.5Z" fill="#fafafa" stroke="#b4b4b4" stroke-width="1"/></svg>
<div class="t" style="left:417px;top:198px">Name</div>
<div class="t" style="left:517px;top:198px">Type</div>
<div class="t" style="left:637px;top:198px">L2 MTU</div>
<div class="t" style="left:687px;top:198px">Tx</div>
<div class="t" style="left:807px;top:198px">Rx</div>
<div class="t" style="left:927px;top:198px">Tx Packet (p/s)</div>
<div class="t" style="left:1027px;top:198px">Rx Packet (p/s)</div>
<div class="a" style="left:387px;top:227px;width:759px;height:1px;background:#ececec"></div>
<div class="t" style="left:389px;top:213px">R</div>
<svg style="left:416px;top:214px" width="18" height="12" viewBox="0 0 18 12"><g fill="#d4d4fa" stroke="#000" stroke-width="1" stroke-linejoin="miter"><path d="M2.4 5.4 L5.5 2.3 L6.5 3.5 V7.3 L5.5 8.5Z"/><path d="M15.6 5.4 L12.5 8.5 L11.5 7.3 V3.5 L12.5 2.3Z"/></g><rect x="4.9" y="4.8" width="1" height="1.2" fill="#000"/><rect x="12.1" y="4.8" width="1" height="1.2" fill="#000"/><rect x="8" y="4.8" width="2" height="1.2" fill="#000"/></svg>
<div class="t" style="left:433px;top:213px">LINK-1</div>
<div class="t" style="left:517px;top:213px">PPPoE Client</div>
<div class="r" style="left:562px;top:213px"></div>
<div class="r" style="left:682px;top:213px">768.3 kbps</div>
<div class="r" style="left:802px;top:213px">6.7 Mbps</div>
<div class="r" style="left:902px;top:213px">583</div>
<div class="r" style="left:1002px;top:213px">715</div>
<div class="a" style="left:387px;top:242px;width:759px;height:1px;background:#ececec"></div>
<div class="t" style="left:389px;top:228px">R</div>
<svg style="left:416px;top:229px" width="18" height="12" viewBox="0 0 18 12"><g fill="#d4d4fa" stroke="#000" stroke-width="1" stroke-linejoin="miter"><path d="M2.4 5.4 L5.5 2.3 L6.5 3.5 V7.3 L5.5 8.5Z"/><path d="M15.6 5.4 L12.5 8.5 L11.5 7.3 V3.5 L12.5 2.3Z"/></g><rect x="4.9" y="4.8" width="1" height="1.2" fill="#000"/><rect x="12.1" y="4.8" width="1" height="1.2" fill="#000"/><rect x="8" y="4.8" width="2" height="1.2" fill="#000"/></svg>
<div class="t" style="left:433px;top:228px">LINK-2</div>
<div class="t" style="left:517px;top:228px">PPPoE Client</div>
<div class="r" style="left:562px;top:228px"></div>
<div class="r" style="left:682px;top:228px">504.9 kbps</div>
<div class="r" style="left:802px;top:228px">9.9 Mbps</div>
<div class="r" style="left:902px;top:228px">609</div>
<div class="r" style="left:1002px;top:228px">974</div>
<div class="a" style="left:387px;top:257px;width:759px;height:1px;background:#ececec"></div>
<div class="t" style="left:389px;top:243px">R</div>
<svg style="left:416px;top:244px" width="18" height="12" viewBox="0 0 18 12"><g fill="#d4d4fa" stroke="#000" stroke-width="1" stroke-linejoin="miter"><path d="M2.4 5.4 L5.5 2.3 L6.5 3.5 V7.3 L5.5 8.5Z"/><path d="M15.6 5.4 L12.5 8.5 L11.5 7.3 V3.5 L12.5 2.3Z"/></g><rect x="4.9" y="4.8" width="1" height="1.2" fill="#000"/><rect x="12.1" y="4.8" width="1" height="1.2" fill="#000"/><rect x="8" y="4.8" width="2" height="1.2" fill="#000"/></svg>
<div class="t" style="left:433px;top:243px">LINK-3</div>
<div class="t" style="left:517px;top:243px">PPPoE Client</div>
<div class="r" style="left:562px;top:243px"></div>
<div class="r" style="left:682px;top:243px">1950.7 kbps</div>
<div class="r" style="left:802px;top:243px">9.2 Mbps</div>
<div class="r" style="left:902px;top:243px">735</div>
<div class="r" style="left:1002px;top:243px">965</div>
<div class="a" style="left:387px;top:257px;width:759px;height:15px;background:#a6c6ee;border-top:1px dotted #7890b0;border-bottom:1px dotted #7890b0"></div>
<div class="vl" style="left:414px;top:258px;height:14px;background:#e8eef8"></div>
<div class="vl" style="left:514px;top:258px;height:14px;background:#e8eef8"></div>
<div class="vl" style="left:634px;top:258px;height:14px;background:#e8eef8"></div>
<div class="vl" style="left:684px;top:258px;height:14px;background:#e8eef8"></div>
<div class="vl" style="left:804px;top:258px;height:14px;background:#e8eef8"></div>
<div class="vl" style="left:924px;top:258px;height:14px;background:#e8eef8"></div>
<div class="vl" style="left:1024px;top:258px;height:14px;background:#e8eef8"></div>
<div class="vl" style="left:1124px;top:258px;height:14px;background:#e8eef8"></div>
<div class="t" style="left:389px;top:258px">R</div>
<svg style="left:416px;top:259px" width="18" height="12" viewBox="0 0 18 12"><g fill="#c42030" stroke="#000" stroke-width="1" stroke-linejoin="miter"><path d="M2.4 5.4 L5.5 2.2 L6.5 3.5 V7.3 L5.5 8.6Z"/><path d="M15.6 5.4 L12.5 8.6 L11.5 7.3 V3.5 L12.5 2.2Z"/></g><g fill="#000"><rect x="8.1" y="0" width="1.7" height="4.2"/><rect x="8.1" y="4.9" width="1.7" height="1"/><rect x="8.1" y="6.8" width="1.7" height="3.9"/></g></svg>
<div class="t" style="left:433px;top:258px">LOCAL</div>
<div class="t" style="left:517px;top:258px">Ethernet</div>
<div class="r" style="left:562px;top:258px">1590</div>
<div class="r" style="left:682px;top:258px">26.3 Mbps</div>
<div class="r" style="left:802px;top:258px">3.3 Mbps</div>
<div class="r" style="left:902px;top:258px">2 618</div>
<div class="r" style="left:1002px;top:258px">1 871</div>
<div class="a" style="left:387px;top:287px;width:759px;height:1px;background:#ececec"></div>
<div class="t" style="left:389px;top:273px">R</div>
<svg style="left:416px;top:274px" width="18" height="12" viewBox="0 0 18 12"><g fill="#c42030" stroke="#000" stroke-width="1" stroke-linejoin="miter"><path d="M2.4 5.4 L5.5 2.2 L6.5 3.5 V7.3 L5.5 8.6Z"/><path d="M15.6 5.4 L12.5 8.6 L11.5 7.3 V3.5 L12.5 2.2Z"/></g><g fill="#000"><rect x="8.1" y="0" width="1.7" height="4.2"/><rect x="8.1" y="4.9" width="1.7" height="1"/><rect x="8.1" y="6.8" width="1.7" height="3.9"/></g></svg>
<div class="t" style="left:433px;top:273px">ether2</div>
<div class="t" style="left:517px;top:273px">Ethernet</div>
<div class="r" style="left:562px;top:273px">1590</div>
<div class="r" style="left:682px;top:273px">872.7 kbps</div>
<div class="r" style="left:802px;top:273px">6.9 Mbps</div>
<div class="r" style="left:902px;top:273px">585</div>
<div class="r" style="left:1002px;top:273px">715</div>
<div class="a" style="left:387px;top:302px;width:759px;height:1px;background:#ececec"></div>
<div class="t" style="left:389px;top:288px">R</div>
<svg style="left:416px;top:289px" width="18" height="12" viewBox="0 0 18 12"><g fill="#c42030" stroke="#000" stroke-width="1" stroke-linejoin="miter"><path d="M2.4 5.4 L5.5 2.2 L6.5 3.5 V7.3 L5.5 8.6Z"/><path d="M15.6 5.4 L12.5 8.6 L11.5 7.3 V3.5 L12.5 2.2Z"/></g><g fill="#000"><rect x="8.1" y="0" width="1.7" height="4.2"/><rect x="8.1" y="4.9" width="1.7" height="1"/><rect x="8.1" y="6.8" width="1.7" height="3.9"/></g></svg>
<div class="t" style="left:433px;top:288px">ether3</div>
<div class="t" style="left:517px;top:288px">Ethernet</div>
<div class="r" style="left:562px;top:288px">1590</div>
<div class="r" style="left:682px;top:288px">613.8 kbps</div>
<div class="r" style="left:802px;top:288px">10.1 Mbps</div>
<div class="r" style="left:902px;top:288px">611</div>
<div class="r" style="left:1002px;top:288px">974</div>
<div class="a" style="left:387px;top:317px;width:759px;height:1px;background:#ececec"></div>
<div class="t" style="left:389px;top:303px">R</div>
<svg style="left:416px;top:304px" width="18" height="12" viewBox="0 0 18 12"><g fill="#c42030" stroke="#000" stroke-width="1" stroke-linejoin="miter"><path d="M2.4 5.4 L5.5 2.2 L6.5 3.5 V7.3 L5.5 8.6Z"/><path d="M15.6 5.4 L12.5 8.6 L11.5 7.3 V3.5 L12.5 2.2Z"/></g><g fill="#000"><rect x="8.1" y="0" width="1.7" height="4.2"/><rect x="8.1" y="4.9" width="1.7" height="1"/><rect x="8.1" y="6.8" width="1.7" height="3.9"/></g></svg>
<div class="t" style="left:433px;top:303px">ether4</div>
<div class="t" style="left:517px;top:303px">Ethernet</div>
<div class="r" style="left:562px;top:303px">1590</div>
<div class="r" style="left:682px;top:303px">2.0 Mbps</div>
<div class="r" style="left:802px;top:303px">9.4 Mbps</div>
<div class="r" style="left:902px;top:303px">737</div>
<div class="r" style="left:1002px;top:303px">966</div>
<div class="a" style="left:387px;top:332px;width:759px;height:1px;background:#ececec"></div>
<div class="t" style="left:389px;top:318px"></div>
<svg style="left:416px;top:319px" width="18" height="12" viewBox="0 0 18 12"><g fill="#c42030" stroke="#000" stroke-width="1" stroke-linejoin="miter"><path d="M2.4 5.4 L5.5 2.2 L6.5 3.5 V7.3 L5.5 8.6Z"/><path d="M15.6 5.4 L12.5 8.6 L11.5 7.3 V3.5 L12.5 2.2Z"/></g><g fill="#000"><rect x="8.1" y="0" width="1.7" height="4.2"/><rect x="8.1" y="4.9" width="1.7" height="1"/><rect x="8.1" y="6.8" width="1.7" height="3.9"/></g></svg>
<div class="t" style="left:433px;top:318px">ether5</div>
<div class="t" style="left:517px;top:318px">Ethernet</div>
<div class="r" style="left:562px;top:318px">1590</div>
<div class="r" style="left:682px;top:318px">0 bps</div>
<div class="r" style="left:802px;top:318px">0 bps</div>
<div class="r" style="left:902px;top:318px">0</div>
<div class="r" style="left:1002px;top:318px">0</div>
<div class="a" style="left:387px;top:347px;width:759px;height:1px;background:#ececec"></div>
<div class="t" style="left:389px;top:333px"></div>
<svg style="left:416px;top:334px" width="18" height="12" viewBox="0 0 18 12"><g fill="#c42030" stroke="#000" stroke-width="1" stroke-linejoin="miter"><path d="M2.4 5.4 L5.5 2.2 L6.5 3.5 V7.3 L5.5 8.6Z"/><path d="M15.6 5.4 L12.5 8.6 L11.5 7.3 V3.5 L12.5 2.2Z"/></g><g fill="#000"><rect x="8.1" y="0" width="1.7" height="4.2"/><rect x="8.1" y="4.9" width="1.7" height="1"/><rect x="8.1" y="6.8" width="1.7" height="3.9"/></g></svg>
<div class="t" style="left:433px;top:333px">ether6</div>
<div class="t" style="left:517px;top:333px">Ethernet</div>
<div class="r" style="left:562px;top:333px">1590</div>
<div class="r" style="left:682px;top:333px">0 bps</div>
<div class="r" style="left:802px;top:333px">0 bps</div>
<div class="r" style="left:902px;top:333px">0</div>
<div class="r" style="left:1002px;top:333px">0</div>
<div class="a" style="left:387px;top:362px;width:759px;height:1px;background:#ececec"></div>
<div class="t" style="left:389px;top:348px"></div>
<svg style="left:416px;top:349px" width="18" height="12" viewBox="0 0 18 12"><g fill="#c42030" stroke="#000" stroke-width="1" stroke-linejoin="miter"><path d="M2.4 5.4 L5.5 2.2 L6.5 3.5 V7.3 L5.5 8.6Z"/><path d="M15.6 5.4 L12.5 8.6 L11.5 7.3 V3.5 L12.5 2.2Z"/></g><g fill="#000"><rect x="8.1" y="0" width="1.7" height="4.2"/><rect x="8.1" y="4.9" width="1.7" height="1"/><rect x="8.1" y="6.8" width="1.7" height="3.9"/></g></svg>
<div class="t" style="left:433px;top:348px">ether7</div>
<div class="t" style="left:517px;top:348px">Ethernet</div>
<div class="r" style="left:562px;top:348px">1590</div>
<div class="r" style="left:682px;top:348px">0 bps</div>
<div class="r" style="left:802px;top:348px">0 bps</div>
<div class="r" style="left:902px;top:348px">0</div>
<div class="r" style="left:1002px;top:348px">0</div>
<div class="a" style="left:387px;top:377px;width:759px;height:1px;background:#ececec"></div>
<div class="t" style="left:389px;top:363px"></div>
<svg style="left:416px;top:364px" width="18" height="12" viewBox="0 0 18 12"><g fill="#c42030" stroke="#000" stroke-width="1" stroke-linejoin="miter"><path d="M2.4 5.4 L5.5 2.2 L6.5 3.5 V7.3 L5.5 8.6Z"/><path d="M15.6 5.4 L12.5 8.6 L11.5 7.3 V3.5 L12.5 2.2Z"/></g><g fill="#000"><rect x="8.1" y="0" width="1.7" height="4.2"/><rect x="8.1" y="4.9" width="1.7" height="1"/><rect x="8.1" y="6.8" width="1.7" height="3.9"/></g></svg>
<div class="t" style="left:433px;top:363px">ether8</div>
<div class="t" style="left:517px;top:363px">Ethernet</div>
<div class="r" style="left:562px;top:363px">1590</div>
<div class="r" style="left:682px;top:363px">0 bps</div>
<div class="r" style="left:802px;top:363px">0 bps</div>
<div class="r" style="left:902px;top:363px">0</div>
<div class="r" style="left:1002px;top:363px">0</div>
<div class="a" style="left:387px;top:392px;width:759px;height:1px;background:#ececec"></div>
<div class="t" style="left:389px;top:378px"></div>
<svg style="left:416px;top:379px" width="18" height="12" viewBox="0 0 18 12"><g fill="#c42030" stroke="#000" stroke-width="1" stroke-linejoin="miter"><path d="M2.4 5.4 L5.5 2.2 L6.5 3.5 V7.3 L5.5 8.6Z"/><path d="M15.6 5.4 L12.5 8.6 L11.5 7.3 V3.5 L12.5 2.2Z"/></g><g fill="#000"><rect x="8.1" y="0" width="1.7" height="4.2"/><rect x="8.1" y="4.9" width="1.7" height="1"/><rect x="8.1" y="6.8" width="1.7" height="3.9"/></g></svg>
<div class="t" style="left:433px;top:378px">ether9</div>
<div class="t" style="left:517px;top:378px">Ethernet</div>
<div class="r" style="left:562px;top:378px">1590</div>
<div class="r" style="left:682px;top:378px">0 bps</div>
<div class="r" style="left:802px;top:378px">0 bps</div>
<div class="r" style="left:902px;top:378px">0</div>
<div class="r" style="left:1002px;top:378px">0</div>
<div class="a" style="left:387px;top:407px;width:759px;height:1px;background:#ececec"></div>
<div class="t" style="left:389px;top:393px"></div>
<svg style="left:416px;top:394px" width="18" height="12" viewBox="0 0 18 12"><g fill="#c42030" stroke="#000" stroke-width="1" stroke-linejoin="miter"><path d="M2.4 5.4 L5.5 2.2 L6.5 3.5 V7.3 L5.5 8.6Z"/><path d="M15.6 5.4 L12.5 8.6 L11.5 7.3 V3.5 L12.5 2.2Z"/></g><g fill="#000"><rect x="8.1" y="0" width="1.7" height="4.2"/><rect x="8.1" y="4.9" width="1.7" height="1"/><rect x="8.1" y="6.8" width="1.7" height="3.9"/></g></svg>
<div class="t" style="left:433px;top:393px">ether10</div>
<div class="t" style="left:517px;top:393px">Ethernet</div>
<div class="r" style="left:562px;top:393px">1590</div>
<div class="r" style="left:682px;top:393px">0 bps</div>
<div class="r" style="left:802px;top:393px">0 bps</div>
<div class="r" style="left:902px;top:393px">0</div>
<div class="r" style="left:1002px;top:393px">0</div>
<div class="a" style="left:387px;top:422px;width:759px;height:1px;background:#ececec"></div>
<div class="t" style="left:389px;top:408px"></div>
<svg style="left:416px;top:409px" width="18" height="12" viewBox="0 0 18 12"><g fill="#c42030" stroke="#000" stroke-width="1" stroke-linejoin="miter"><path d="M2.4 5.4 L5.5 2.2 L6.5 3.5 V7.3 L5.5 8.6Z"/><path d="M15.6 5.4 L12.5 8.6 L11.5 7.3 V3.5 L12.5 2.2Z"/></g><g fill="#000"><rect x="8.1" y="0" width="1.7" height="4.2"/><rect x="8.1" y="4.9" width="1.7" height="1"/><rect x="8.1" y="6.8" width="1.7" height="3.9"/></g></svg>
<div class="t" style="left:433px;top:408px">ether11</div>
<div class="t" style="left:517px;top:408px">Ethernet</div>
<div class="r" style="left:562px;top:408px">1590</div>
<div class="r" style="left:682px;top:408px">0 bps</div>
<div class="r" style="left:802px;top:408px">0 bps</div>
<div class="r" style="left:902px;top:408px">0</div>
<div class="r" style="left:1002px;top:408px">0</div>
<div class="a" style="left:387px;top:437px;width:759px;height:1px;background:#ececec"></div>
<div class="t" style="left:389px;top:423px"></div>
<svg style="left:416px;top:424px" width="18" height="12" viewBox="0 0 18 12"><g fill="#c42030" stroke="#000" stroke-width="1" stroke-linejoin="miter"><path d="M2.4 5.4 L5.5 2.2 L6.5 3.5 V7.3 L5.5 8.6Z"/><path d="M15.6 5.4 L12.5 8.6 L11.5 7.3 V3.5 L12.5 2.2Z"/></g><g fill="#000"><rect x="8.1" y="0" width="1.7" height="4.2"/><rect x="8.1" y="4.9" width="1.7" height="1"/><rect x="8.1" y="6.8" width="1.7" height="3.9"/></g></svg>
<div class="t" style="left:433px;top:423px">ether12</div>
<div class="t" style="left:517px;top:423px">Ethernet</div>
<div class="r" style="left:562px;top:423px">1590</div>
<div class="r" style="left:682px;top:423px">0 bps</div>
<div class="r" style="left:802px;top:423px">0 bps</div>
<div class="r" style="left:902px;top:423px">0</div>
<div class="r" style="left:1002px;top:423px">0</div>
<div class="a" style="left:1147px;top:166px;width:1px;height:296px;background:#fff"></div>
<div class="a" style="left:1148px;top:166px;width:1px;height:296px;background:#b0b0b0"></div>
<div class="a" style="left:386px;top:462px;width:763px;height:22px;border:1px solid #a0a0a0"></div>
<div class="t" style="left:389px;top:465px">15 items (1 selected)</div>
</body></html>
